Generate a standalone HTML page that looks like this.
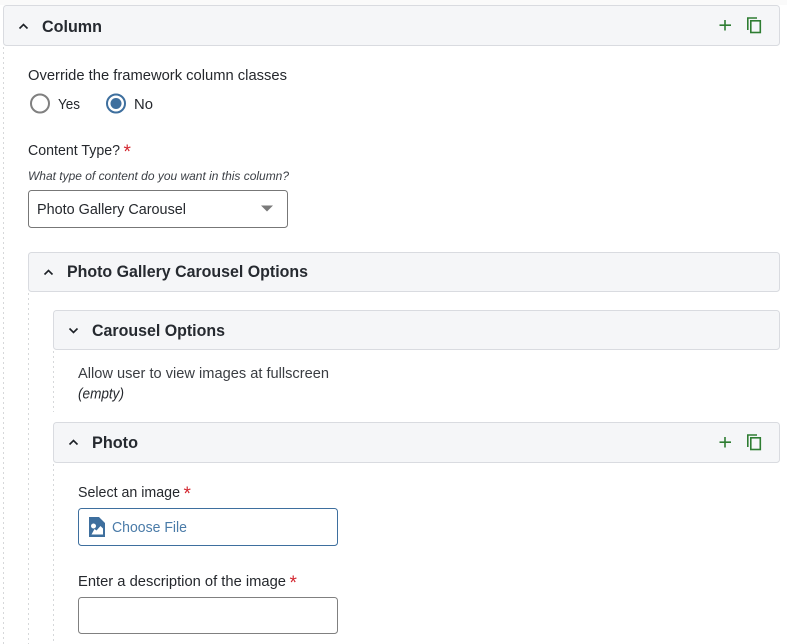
<!DOCTYPE html>
<html lang="en"><head><meta charset="utf-8"><title>Column</title>
<style>
html,body{margin:0;padding:0;background:#fff;width:787px;height:644px;overflow:hidden}
svg{display:block}
text{font-family:"Liberation Sans",sans-serif;fill:#25282d}
.h{font-size:16.5px;font-weight:bold;fill:#262a30}
.b{font-size:14.5px}
.r{fill:#d3262f;font-size:19px}
.box{fill:#f5f6f8;stroke:#d9dbe0;stroke-width:1}
.dot{stroke:#d6d8da;stroke-width:1;stroke-dasharray:2 3;fill:none}
.chev{fill:none;stroke:#1d2127;stroke-width:1.6}
.act{fill:none;stroke:#2e7d32;stroke-width:1.6}
</style></head><body>
<svg width="787" height="644" viewBox="0 0 787 644" xmlns="http://www.w3.org/2000/svg">
<rect x="0" y="0" width="787" height="5" fill="#fafafa"/>
<path class="dot" d="M3.5 47V644M28.5 293V644M53.5 351V412M53.5 464V644"/>

<rect class="box" x="3.5" y="5.5" width="776" height="40" rx="3"/>
<path class="chev" d="M19.5 28.500l4-4 4 4"/>
<text class="h" x="42" y="32" textLength="60" lengthAdjust="spacingAndGlyphs">Column</text>
<path class="act" d="M725 20v10.500M719.500 25.200h11.500"/>
<path class="act" d="M757 18h-9.200v12"/>
<rect class="act" x="750.800" y="20.800" width="9.500" height="11.700"/>

<text class="b" x="28" y="80" textLength="259" lengthAdjust="spacingAndGlyphs">Override the framework column classes</text>
<circle cx="40" cy="103.500" r="9" fill="#fff" stroke="#808080" stroke-width="2"/>
<text class="b" x="58" y="109" textLength="22" lengthAdjust="spacingAndGlyphs">Yes</text>
<circle cx="116" cy="103.500" r="9" fill="#fff" stroke="#3e6f9e" stroke-width="2"/>
<circle cx="116" cy="103.500" r="5.500" fill="#3e6f9e"/>
<text class="b" x="134" y="109" textLength="19" lengthAdjust="spacingAndGlyphs">No</text>

<text class="b" x="28" y="155" textLength="92" lengthAdjust="spacingAndGlyphs">Content Type?</text>
<text class="r" x="123.500" y="158">*</text>
<text x="28" y="180" font-size="12" font-style="italic" style="fill:#3c4046" textLength="261" lengthAdjust="spacingAndGlyphs">What type of content do you want in this column?</text>
<rect x="28.500" y="190.500" width="259" height="37" rx="3" fill="#fff" stroke="#777" stroke-width="1"/>
<text class="b" x="37" y="214" textLength="149" lengthAdjust="spacingAndGlyphs">Photo Gallery Carousel</text>
<path d="M261 205.500h12l-6 6z" fill="#7a7a7a"/>

<rect class="box" x="28.500" y="252.500" width="751" height="39" rx="3"/>
<path class="chev" d="M44.500 274.500l4-4 4 4"/>
<text class="h" x="67" y="277" textLength="241" lengthAdjust="spacingAndGlyphs">Photo Gallery Carousel Options</text>

<rect class="box" x="53.500" y="310.500" width="726" height="39" rx="3"/>
<path class="chev" d="M69.500 328.500l4 4 4-4"/>
<text class="h" x="92" y="336" textLength="133" lengthAdjust="spacingAndGlyphs">Carousel Options</text>

<text class="b" x="78" y="378" style="fill:#3a3d42" textLength="251" lengthAdjust="spacingAndGlyphs">Allow user to view images at fullscreen</text>
<text class="b" x="78" y="398.500" font-style="italic" textLength="46" lengthAdjust="spacingAndGlyphs">(empty)</text>

<rect class="box" x="53.500" y="422.500" width="726" height="40" rx="3"/>
<path class="chev" d="M69.500 444.500l4-4 4 4"/>
<text class="h" x="92" y="448" textLength="46" lengthAdjust="spacingAndGlyphs">Photo</text>
<path class="act" d="M725 437v10.500M719.500 442.200h11.500"/>
<path class="act" d="M757 435h-9.200v12"/>
<rect class="act" x="750.800" y="437.800" width="9.500" height="11.700"/>

<text class="b" x="78" y="497" textLength="102" lengthAdjust="spacingAndGlyphs">Select an image</text>
<text class="r" x="183.500" y="500">*</text>
<rect x="78.500" y="508.500" width="259" height="37" rx="3" fill="#fff" stroke="#3e6f9e" stroke-width="1"/>
<path fill-rule="evenodd" d="M89 517h10l6 6v14H89zM93.500 523.500a2.500 2.500 0 1 0 .01 0zM91.500 534.500h11.500v-6l-2.500-2.500-4 4.500-2-1.500z" fill="#3e6f9e"/>
<text class="b" x="112" y="532" style="fill:#4a7ba8" textLength="75" lengthAdjust="spacingAndGlyphs">Choose File</text>

<text class="b" x="78" y="586" textLength="208" lengthAdjust="spacingAndGlyphs">Enter a description of the image</text>
<text class="r" x="289.500" y="589">*</text>
<rect x="78.500" y="597.500" width="259" height="36" rx="3" fill="#fff" stroke="#808080" stroke-width="1"/>
</svg>
</body></html>
